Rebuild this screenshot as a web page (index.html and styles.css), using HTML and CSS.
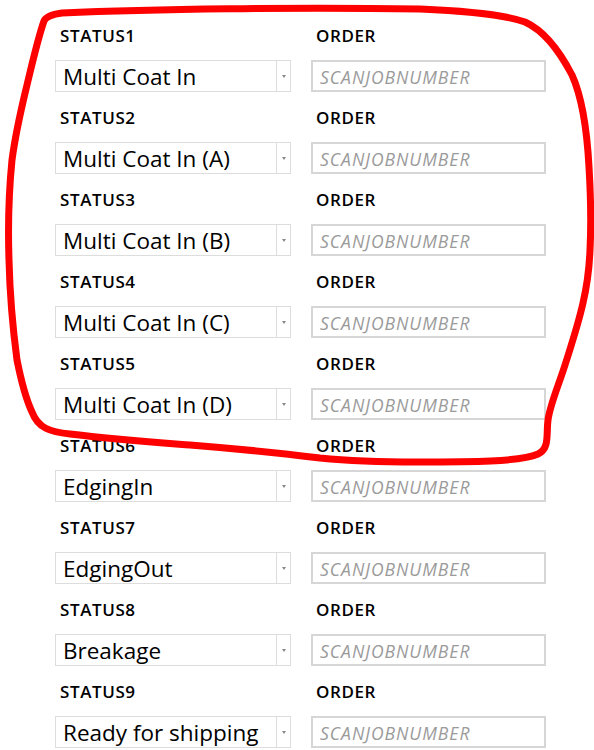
FILE: index.html
```html
<!DOCTYPE html>
<html lang="en">
<head>
  <meta charset="UTF-8" />
  <title>Status Scan</title>
  <link rel="stylesheet" href="styles.css">
</head>
<body>
  <div class="form">
    <div class="row">
      <div class="field"><div class="label">STATUS1</div><div class="select"><span class="value">Multi Coat In</span><span class="arrow"></span></div></div>
      <div class="field"><div class="label">ORDER</div><input class="order" type="text" placeholder="SCANJOBNUMBER" /></div>
    </div>
    <div class="row">
      <div class="field"><div class="label">STATUS2</div><div class="select"><span class="value">Multi Coat In (A)</span><span class="arrow"></span></div></div>
      <div class="field"><div class="label">ORDER</div><input class="order" type="text" placeholder="SCANJOBNUMBER" /></div>
    </div>
    <div class="row">
      <div class="field"><div class="label">STATUS3</div><div class="select"><span class="value">Multi Coat In (B)</span><span class="arrow"></span></div></div>
      <div class="field"><div class="label">ORDER</div><input class="order" type="text" placeholder="SCANJOBNUMBER" /></div>
    </div>
    <div class="row">
      <div class="field"><div class="label">STATUS4</div><div class="select"><span class="value">Multi Coat In (C)</span><span class="arrow"></span></div></div>
      <div class="field"><div class="label">ORDER</div><input class="order" type="text" placeholder="SCANJOBNUMBER" /></div>
    </div>
    <div class="row">
      <div class="field"><div class="label">STATUS5</div><div class="select"><span class="value">Multi Coat In (D)</span><span class="arrow"></span></div></div>
      <div class="field"><div class="label">ORDER</div><input class="order" type="text" placeholder="SCANJOBNUMBER" /></div>
    </div>
    <div class="row">
      <div class="field"><div class="label">STATUS6</div><div class="select"><span class="value">EdgingIn</span><span class="arrow"></span></div></div>
      <div class="field"><div class="label">ORDER</div><input class="order" type="text" placeholder="SCANJOBNUMBER" /></div>
    </div>
    <div class="row">
      <div class="field"><div class="label">STATUS7</div><div class="select"><span class="value">EdgingOut</span><span class="arrow"></span></div></div>
      <div class="field"><div class="label">ORDER</div><input class="order" type="text" placeholder="SCANJOBNUMBER" /></div>
    </div>
    <div class="row">
      <div class="field"><div class="label">STATUS8</div><div class="select"><span class="value">Breakage</span><span class="arrow"></span></div></div>
      <div class="field"><div class="label">ORDER</div><input class="order" type="text" placeholder="SCANJOBNUMBER" /></div>
    </div>
    <div class="row">
      <div class="field"><div class="label">STATUS9</div><div class="select"><span class="value">Ready for shipping</span><span class="arrow"></span></div></div>
      <div class="field"><div class="label">ORDER</div><input class="order" type="text" placeholder="SCANJOBNUMBER" /></div>
    </div>
  </div>

  <!-- hand drawn marker around the first five rows -->
  <svg class="marker" width="594" height="750" viewBox="0 0 594 750">
    <path d="M44 21 C 46 16, 55 14, 62 13 C 150 9, 300 7, 420 9 C 470 11, 505 15, 525 22 C 545 31, 560 52, 572 75 C 582 97, 587 130, 589 167 C 591 200, 591 230, 590 250 C 589 275, 586 290, 583 303 C 578 325, 572 343, 565 365 C 558 387, 550 405, 548 420 C 546 435, 550 448, 538 454 C 520 462, 470 462, 417 462 C 380 462, 350 461, 320 458 C 280 453, 240 449, 190 445 C 150 442, 120 440, 70 434 C 50 432, 38 428, 32 412 C 24 395, 20 375, 17 360 C 13 330, 10 300, 9 260 C 8 230, 8 200, 12 160 C 16 130, 21 110, 27 85 C 33 60, 38 38, 44 21 Z" />
  </svg>
</body>
</html>
```

FILE: styles.css
```css
body {
  margin: 0;
  background: #fff;
  font-family: 'Open Sans', 'Noto Sans', sans-serif;
  color: #000;
}
.form {
  padding: 10px 0 0 55px;
}
.row {
  display: grid;
  grid-template-columns: 236px 235px;
  column-gap: 20px;
}
.field {
  display: flex;
  flex-direction: column;
}
.label {
  height: 50px;
  box-sizing: border-box;
  padding: 15px 0 0 5px;
  font-size: 17px;
  font-weight: 600;
  line-height: 22px;
  letter-spacing: 0.6px;
}
.select {
  display: flex;
  height: 32px;
  box-sizing: border-box;
  border: 1px solid #ddd;
}
.value {
  flex: 1;
  padding: 1px 0 0 7px;
  font-size: 22.5px;
  line-height: 30px;
  white-space: nowrap;
  overflow: hidden;
}
.arrow {
  width: 13px;
  border-left: 1px solid #ddd;
  position: relative;
}
.arrow::after {
  content: "";
  position: absolute;
  left: 5px;
  top: 14px;
  border-left: 2px solid transparent;
  border-right: 2px solid transparent;
  border-top: 3px solid #888;
}
.order {
  height: 32px;
  box-sizing: border-box;
  margin: 0;
  padding: 1px 0 0 7px;
  border: 2px solid #d6d6d6;
  font-family: inherit;
  font-size: 17.5px;
  letter-spacing: 1px;
  outline: none;
}
.order::placeholder {
  color: #9a9a9a;
  font-style: italic;
}
.marker {
  position: absolute;
  top: 0;
  left: 0;
  pointer-events: none;
}
.marker path {
  fill: none;
  stroke: #f00;
  stroke-width: 7;
  stroke-linejoin: round;
}
```
